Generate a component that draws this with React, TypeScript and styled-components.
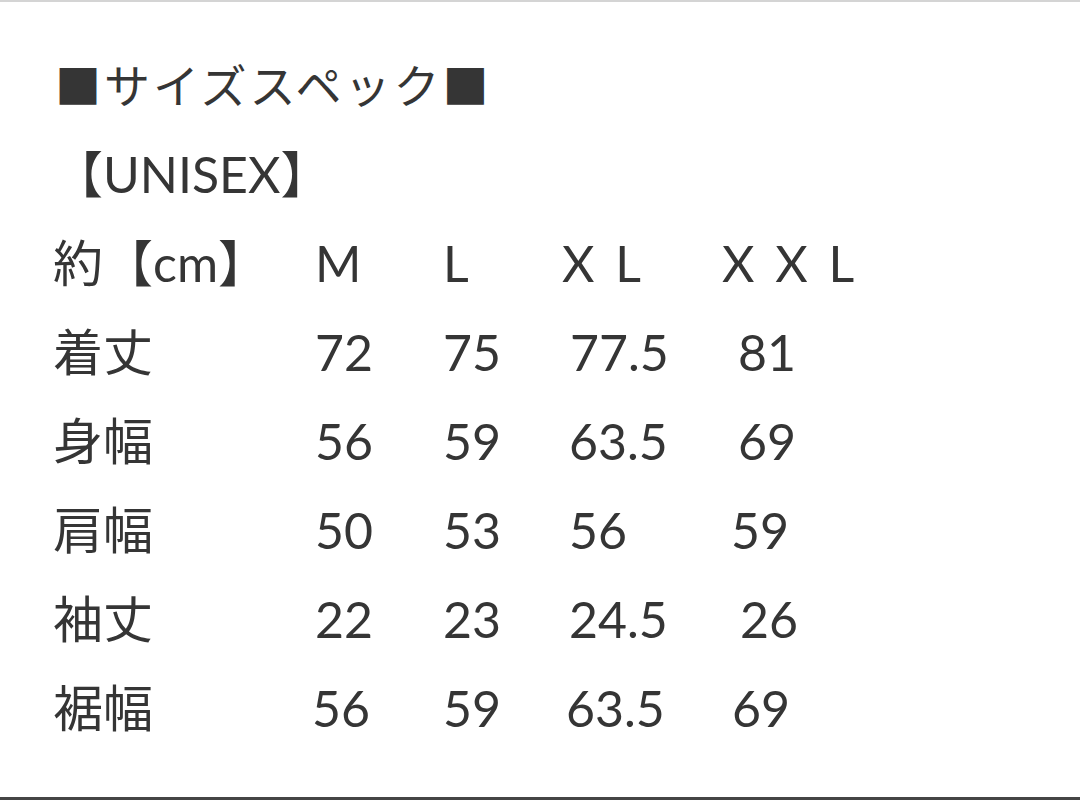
import React from "react";
import styled, { createGlobalStyle } from "styled-components";

const Global = createGlobalStyle`
  html, body { margin: 0; padding: 0; background: #ffffff; }
  body { width: 1080px; height: 800px; overflow: hidden; }
`;

const Page = styled.div`
  width: 1080px;
  height: 800px;
  box-sizing: border-box;
  background: #fff;
  border-top: 2px solid #d4d4d4;
  border-bottom: 3px solid #454545;
  font-family: "Lato", "Noto Sans CJK JP", sans-serif;
  color: #353535;
  display: flex;
  flex-direction: column;
  padding: 39px 0 0 50px;
`;

const Title = styled.div`
  font-size: 46px;
  line-height: 89px;
  height: 89px;
  white-space: nowrap;
  letter-spacing: 3px;
  padding-left: 5px;
`;

const Sub = styled.div`
  font-size: 50px;
  line-height: 89px;
  height: 89px;
  white-space: nowrap;
  padding-left: 3px;
`;

const Table = styled.div`
  display: grid;
  grid-template-columns: 265px 128px 126px 169px auto;
  grid-auto-rows: 89px;
  align-items: center;
  font-size: 50px;
`;

const Cell = styled.div<{ $shift?: number; $spacing?: number }>`
  white-space: nowrap;
  line-height: 89px;
  letter-spacing: ${(p) => p.$spacing ?? 0}px;
  transform: translateX(${(p) => p.$shift ?? 0}px);
`;

const Label = styled(Cell)`
  font-size: 50px;
  padding-left: 3px;
`;

const rows: [string, string[], number[]][] = [
  ["着丈", ["72", "75", "77.5", "81"], [0, 0, 1, 0]],
  ["身幅", ["56", "59", "63.5", "69"], [0, 0, 0, 0]],
  ["肩幅", ["50", "53", "56", "59"], [0, 0, 0, -7]],
  ["袖丈", ["22", "23", "24.5", "26"], [0, 0, 0, 2]],
  ["裾幅", ["56", "59", "63.5", "69"], [-3, 0, -3, -6]],
];

export default function App() {
  return (
    <>
      <Global />
      <Page>
        <Title>■サイズスペック■</Title>
        <Sub>【UNISEX】</Sub>
        <Table>
          <Label>約【cm】</Label>
          <Cell $shift={0}>M</Cell>
          <Cell $shift={0}>L</Cell>
          <Cell $shift={-7} $spacing={4}>X L</Cell>
          <Cell $shift={-16} $spacing={4}>X X L</Cell>
          {rows.map(([label, vals, shifts]) => (
            <React.Fragment key={label}>
              <Label>{label}</Label>
              {vals.map((v, i) => (
                <Cell key={i} $shift={shifts[i]}>
                  {v}
                </Cell>
              ))}
            </React.Fragment>
          ))}
        </Table>
      </Page>
    </>
  );
}
